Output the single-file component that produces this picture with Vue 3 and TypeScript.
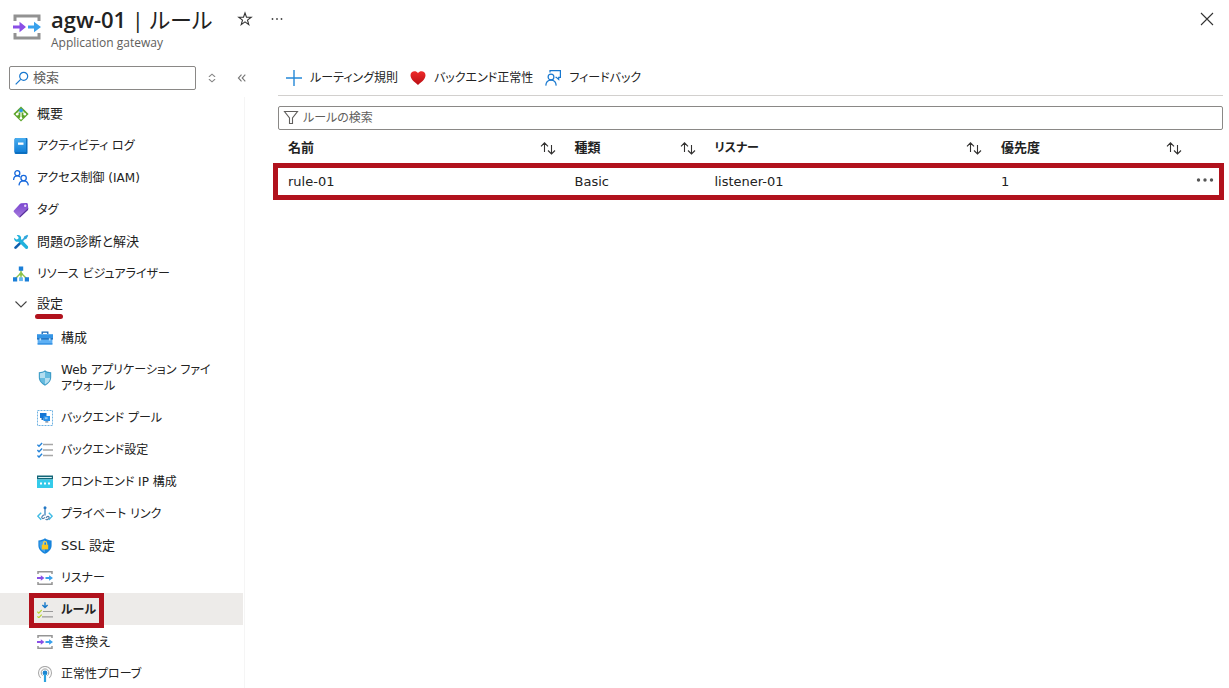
<script setup lang="ts">
import { ref } from 'vue'

interface MenuItem {
  label: string
  icon: string
}

interface Rule {
  name: string
  kind: string
  listener: string
  priority: number
}

const topItems: MenuItem[] = [
  { label: '概要', icon: 'overview' },
  { label: 'アクティビティ ログ', icon: 'log' },
  { label: 'アクセス制御 (IAM)', icon: 'people' },
  { label: 'タグ', icon: 'tag' },
  { label: '問題の診断と解決', icon: 'tools' },
  { label: 'リソース ビジュアライザー', icon: 'tree' },
]

const settingItems: MenuItem[] = [
  { label: '構成', icon: 'toolbox' },
  { label: 'Web アプリケーション ファイアウォール', icon: 'shield' },
  { label: 'バックエンド プール', icon: 'pool' },
  { label: 'バックエンド設定', icon: 'checks' },
  { label: 'フロントエンド IP 構成', icon: 'frontend' },
  { label: 'プライベート リンク', icon: 'link' },
  { label: 'SSL 設定', icon: 'ssl' },
  { label: 'リスナー', icon: 'gateway' },
  { label: 'ルール', icon: 'rules' },
  { label: '書き換え', icon: 'gateway' },
  { label: '正常性プローブ', icon: 'probe' },
]

const columns = ['名前', '種類', 'リスナー', '優先度']
const rules: Rule[] = [{ name: 'rule-01', kind: 'Basic', listener: 'listener-01', priority: 1 }]

const current = 'ルール'
const menuQuery = ref('')
const ruleQuery = ref('')
const expanded = ref(true)

const isKatakana = (text: string): boolean => /[ァ-ヶ]/.test(text)
</script>

<template>
  <div class="blade">
    <svg class="defs" aria-hidden="true">
      <defs>
        <linearGradient id="g-blue" x1="0" y1="0" x2="0" y2="1">
          <stop offset="0" stop-color="#4aaef0" />
          <stop offset="1" stop-color="#1380d8" />
        </linearGradient>
        <linearGradient id="g-purple" x1="0" y1="0" x2="0" y2="1">
          <stop offset="0" stop-color="#7a45d0" />
          <stop offset="1" stop-color="#a67bdc" />
        </linearGradient>
        <linearGradient id="g-heart" x1="0" y1="0" x2="0" y2="1">
          <stop offset="0" stop-color="#ee2a2a" />
          <stop offset="1" stop-color="#b80f14" />
        </linearGradient>
        <symbol id="overview" viewBox="0 0 16 16">
          <path d="M8 .4 15.6 8 8 15.6.4 8z" fill="#5ea52c" />
          <path d="M8 3.6V13M8 4 4 8M8 4l4 4" stroke="#d9efc4" stroke-width="1.6" fill="none" />
          <circle cx="8" cy="4.4" r="1.9" fill="#2a9be4" />
          <circle cx="4.2" cy="8.2" r="1.3" fill="#fff" />
          <circle cx="11.8" cy="8.2" r="1.3" fill="#fff" />
          <circle cx="8" cy="12.2" r="1.3" fill="#fff" />
        </symbol>
        <symbol id="log" viewBox="0 0 16 16">
          <path d="M3 0h10.500a1 1 0 0 1 1 1v14a1 1 0 0 1-1 1H3a1.500 1.500 0 0 1-1.500-1.500V1.500A1.500 1.500 0 0 1 3 0z" fill="#0c6fc0" />
          <path d="M3.300 0H12a1 1 0 0 1 1 1v13H1.500V1.800C1.500.8 2.300 0 3.300 0z" fill="url(#g-blue)" />
          <path d="M5 4.500h5.500v2.300H5z" fill="#fff" />
        </symbol>
        <symbol id="people" viewBox="0 0 16 16">
          <g fill="none" stroke="#1668dc" stroke-width="1.300">
            <circle cx="4.300" cy="3.200" r="2.500" />
            <circle cx="10.600" cy="8.100" r="2.700" />
            <path d="M.6 10C.7 7.500 2.200 5.900 4.300 5.900c1.100 0 2 .4 2.700 1.100M6 15.400c.2-2.900 2-4.600 4.600-4.600s4.500 1.700 4.700 4.600" />
          </g>
        </symbol>
        <symbol id="tag" viewBox="0 0 16 16">
          <path d="M8.200 1.200 13.600.9c.7 0 1.100.3 1.200 1l.5 4.700c0 .5-.1.900-.4 1.200l-7.500 7.400c-.5.500-1 .5-1.500 0L.9 10.100c-.5-.5-.5-1 0-1.500l6.200-6.900c.3-.3.7-.5 1.100-.5z" fill="url(#g-purple)" />
          <path d="m6.800 15.600 8.200-7.700.3-2-8.700 8.300z" fill="#552f99" />
          <circle cx="12.200" cy="3.800" r="1.200" fill="#e6d8fa" />
        </symbol>
        <symbol id="tools" viewBox="0 0 16 16">
          <path d="m14.300.8.9.9-1.900 3.200-1.400.4-2.400 2.500-1.300-1.300L10.700 4l.4-1.400z" fill="#33a7dc" />
          <path d="m6.800 7.800 1.700 1.600-5 5.200c-.6.600-1.300.6-1.900 0s-.6-1.300 0-1.900z" fill="#0f5fae" />
          <path d="M1.200 3.700 3.300 5.600l1.900-.5.400-1.900L3.700 1.200c1.400-.5 2.700-.2 3.600.8.800.9 1 1.900.7 3l6.700 7.100c.6.700.6 1.600 0 2.300-.7.700-1.600.7-2.300 0L5.500 7.700c-1.200.4-2.400.1-3.300-.8S.9 5 1.200 3.700z" fill="#21b2dd" />
        </symbol>
        <symbol id="tree" viewBox="0 0 16 16">
          <path d="M8 4v9M8 7 2.500 12.500M8 7l5.500 5.500" stroke="#8bc34a" stroke-width="1.400" fill="none" />
          <circle cx="8" cy="8" r="1.700" fill="#8bc34a" />
          <path d="M5.800.4h4.400v4.300H5.800zM0 11.200h4.200v4.200H0zM11.800 11.200H16v4.200h-4.200z" fill="#1b7fd8" />
          <path d="M6.100 11.300h3.800v3.800H6.100z" fill="#63b6ee" />
        </symbol>
        <symbol id="toolbox" viewBox="0 0 16 16">
          <path d="M5.200 4V2.200h5.600V4" fill="none" stroke="#1566b7" stroke-width="1.300" />
          <path d="M0 4.200h16v4.400H0z" fill="#3595e6" />
          <path d="M.6 8.600h14.800v5.900H.6z" fill="#5eb0f4" />
          <path d="M0 8.200h16v1.300H0z" fill="#1264b5" />
          <path d="M.6 13.300h14.800v1.200H.6z" fill="#2b8ade" />
          <path d="M2.500 8.200h1.600v2.300H2.500zM11.900 8.200h1.600v2.300h-1.600z" fill="#b9ddf8" />
        </symbol>
        <symbol id="shield" viewBox="0 0 16 16">
          <path d="M8 .3c1.900 1.400 3.800 1.900 6.200 2v5c0 4-3 6.700-6.200 8.500-3.200-1.800-6.200-4.500-6.200-8.500v-5C4.200 2.200 6.100 1.700 8 .3z" fill="#3c9bc6" />
          <path d="M8 1.700v6.200H2.900V3.200C5 3.100 6.500 2.600 8 1.700zM8 7.900h5.100c-.2 3.100-2.600 5.100-5.100 6.600z" fill="#b3def0" />
          <path d="M8 1.700c1.500.9 3 1.400 5.100 1.500v4.700H8zM8 7.900v6.600c-2.500-1.500-4.900-3.500-5.100-6.600z" fill="#66bbdf" />
        </symbol>
        <symbol id="pool" viewBox="0 0 16 16">
          <path d="M.5.500h15v15H.5z" fill="none" stroke="#6fb2e2" stroke-dasharray="2 1" />
          <path d="M3 3h6.500v5H3z" fill="#1475d4" />
          <path d="M6.500 6h6.500v5H6.500z" fill="#2590ec" />
          <path d="M8.300 11h3v1.700h-3z" fill="#8da0b2" />
          <path d="M4.500 8h2v2h-2z" fill="#1c6bb8" />
          <path d="M7.800 7.200h2.800v2H7.800z" fill="#8cc7f7" />
        </symbol>
        <symbol id="checks" viewBox="0 0 16 16">
          <path d="M6 2.600h10M6 8h10M6 13.500h10" stroke="#a6a6a6" stroke-width="1.500" />
          <path d="m.4 2.700 1.600 1.600L5.100 1M.4 8.100 2 9.700l3.100-3.300M.4 13.500 2 15.100l3.100-3.300" fill="none" stroke="#2584da" stroke-width="1.400" />
        </symbol>
        <symbol id="frontend" viewBox="0 0 16 16">
          <path d="M0 1.500h16v4H0z" fill="#146678" />
          <path d="M1.200 3h13.600v1H1.200z" fill="#d8f1f5" />
          <path d="M0 5.500h16V14H0z" fill="#34cbea" />
          <path d="M3 8.500h2v2H3zM7 8.500h2v2H7zM11 8.500h2v2h-2z" fill="#fff" />
        </symbol>
        <symbol id="link" viewBox="0 0 16 16">
          <path d="M4.200 6.700.8 10.200l3.400 3.600M11.800 6.700l3.400 3.500-3.400 3.600" fill="none" stroke="#42bce5" stroke-width="1.400" />
          <path d="M8 2v7.400" stroke="#3c80bd" stroke-width="1.300" />
          <circle cx="8" cy="1.800" r="1.500" fill="#2478c5" />
          <path d="m6.800 8.800-1.600 1.500c-1.100 1.200.2 2.900 1.600 2l1.100-.9M9 11.800l.8-1c1.300-1.300 3 .2 2 1.500l-1 1c-.8.700-1.700.5-2.200-.1" fill="none" stroke="#527eaa" stroke-width="1.200" />
        </symbol>
        <symbol id="ssl" viewBox="0 0 16 16">
          <path d="M8 .3c2 1.500 3.900 2 6.600 2.100v5c0 4-3.200 6.600-6.600 8.400-3.400-1.800-6.600-4.400-6.600-8.400v-5C4.100 2.300 6 1.800 8 .3z" fill="#1683db" />
          <path d="M8 1.700v12.700c-2.700-1.500-5.400-3.700-5.400-7.100V3.600C5 3.400 6.400 2.800 8 1.700z" fill="#45a4ed" />
          <path d="M6.300 7V5.400a1.700 1.700 0 0 1 3.400 0V7" fill="none" stroke="#f5d352" stroke-width="1.200" />
          <path d="M4.800 6.700h6.400v4.700H4.800z" fill="#fac61c" />
        </symbol>
        <symbol id="gateway" viewBox="0 0 16 16">
          <path d="M1 4V1.800h14V4M1 12v2.200h14V12" fill="none" stroke="#959595" stroke-width="1.500" />
          <path d="M0 7.100h3.800V5.200L7.400 8l-3.600 2.800V8.900H0z" fill="#8a4fe6" />
          <path d="M8.500 7.100h3.600V5.200L16 8l-3.900 2.800V8.900H8.500z" fill="#39a1ec" />
        </symbol>
        <symbol id="rules" viewBox="0 0 16 16">
          <path d="M6 9.500h10M5 14.800h11" stroke="#999" stroke-width="1.200" />
          <path d="m.4 9.700 1.400 1.400L4.700 8M.4 14.300l1.400 1.400 2.900-3.100" fill="none" stroke="#b8d532" stroke-width="1.200" />
          <path d="M8 .2v5M5.400 3 8 5.600 10.600 3" fill="none" stroke="#1678c8" stroke-width="1.400" />
        </symbol>
        <symbol id="probe" viewBox="0 0 16 16">
          <path d="M3.800 11.900a6.500 6.500 0 1 1 8.400 0" fill="none" stroke="#aaa" stroke-width="1.100" />
          <path d="M5.500 9.600a3.800 3.800 0 1 1 5 0" fill="none" stroke="#999" />
          <circle cx="8" cy="7" r="2.400" fill="#1b86d1" />
          <path d="M6.900 8h2.200v8H6.900z" fill="#2da3df" />
        </symbol>
        <symbol id="sort" viewBox="0 0 16 16">
          <path d="M4.500 12V3M1 6.300l3.500-3.500L8 6.300M11.500 5v9M8 10.500l3.500 3.500 3.500-3.500" fill="none" stroke="#323130" stroke-width="1.100" />
        </symbol>
      </defs>
    </svg>

    <header class="head">
      <svg class="head-icon" viewBox="0 0 28 28" aria-hidden="true">
        <path d="M2 8V3h24v5M2 20v5h24v-5" fill="none" stroke="#929292" stroke-width="3" />
        <path d="M0 12.500h6.500V8.800l6.500 5.200-6.500 5.200v-3.700H0z" fill="#8a4fe6" />
        <path d="M15 12.500h6V8.800l7 5.200-7 5.200v-3.700h-6z" fill="#39a1ec" />
      </svg>
      <div class="head-text">
        <h1><b>agw-01</b> | ルール</h1>
        <p>Application gateway</p>
      </div>
      <button class="icon-btn" type="button" aria-label="お気に入り">
        <svg width="16" height="16" viewBox="0 0 16 16">
          <path d="m8 2 1.500 4.300h4.700l-3.700 2.800 1.300 4.500L8 10.900l-3.800 2.700 1.300-4.500-3.700-2.800h4.700z" fill="none" stroke="#333" stroke-width="1.100" />
        </svg>
      </button>
      <button class="icon-btn" type="button" aria-label="その他">
        <svg width="16" height="16" viewBox="0 0 16 16" fill="#444">
          <circle cx="3.500" cy="8" r="0.900" /><circle cx="8" cy="8" r="0.900" /><circle cx="12.500" cy="8" r="0.900" />
        </svg>
      </button>
      <button class="icon-btn close" type="button" aria-label="閉じる">
        <svg width="16" height="16" viewBox="0 0 16 16">
          <path d="m2 2 12 12M14 2 2 14" stroke="#333" stroke-width="1.100" />
        </svg>
      </button>
    </header>

    <div class="body">
      <aside class="side">
        <div class="side-tools">
          <label class="field menu-search">
            <svg width="14" height="14" viewBox="0 0 14 14" aria-hidden="true">
              <circle cx="8.700" cy="5.300" r="4" fill="none" stroke="#1878cf" stroke-width="1.200" />
              <path d="m5.700 8.300-5 5" stroke="#1878cf" stroke-width="1.200" />
            </svg>
            <input v-model="menuQuery" type="text" placeholder="検索" aria-label="検索" />
          </label>
          <button class="icon-btn" type="button" aria-label="並べ替え">
            <svg width="16" height="16" viewBox="0 0 16 16">
              <path d="M5.300 7V6.500L8 4.200l2.700 2.300V7M5.300 9v.5L8 11.800l2.700-2.300V9" fill="none" stroke="#888" stroke-width="1.100" />
            </svg>
          </button>
          <button class="icon-btn" type="button" aria-label="折りたたむ">
            <svg width="16" height="16" viewBox="0 0 16 16">
              <path d="M7.500 4.700 4.400 8l3.100 3.300M11.300 4.700 8.200 8l3.100 3.300" fill="none" stroke="#777" stroke-width="1.100" />
            </svg>
          </button>
        </div>
        <nav class="menu">
          <a
            v-for="item in topItems"
            :key="item.label"
            class="item"
            :class="{ kana: isKatakana(item.label) }"
            href="#"
          >
            <svg class="ico" aria-hidden="true"><use :href="'#' + item.icon" /></svg>
            <span>{{ item.label }}</span>
          </a>
          <button class="item group" type="button" :aria-expanded="expanded" @click="expanded = !expanded">
            <svg class="ico" viewBox="0 0 16 16" aria-hidden="true">
              <path d="m2.500 5.500 5.500 5.500 5.500-5.500" fill="none" stroke="#444" stroke-width="1.100" />
            </svg>
            <span class="underlined">設定</span>
          </button>
          <template v-if="expanded">
            <a
              v-for="item in settingItems"
              :key="item.label"
              class="item sub"
              :class="{ active: item.label === current, kana: isKatakana(item.label) }"
              href="#"
            >
              <svg class="ico" aria-hidden="true"><use :href="'#' + item.icon" /></svg>
              <span>{{ item.label }}</span>
            </a>
          </template>
        </nav>
      </aside>

      <main class="main">
        <div class="toolbar">
          <button class="cmd" type="button">
            <svg class="ico" viewBox="0 0 16 16" aria-hidden="true">
              <path d="M8 0v16M0 8h16" stroke="#2488d8" stroke-width="1.400" />
            </svg>
            ルーティング規則
          </button>
          <button class="cmd" type="button">
            <svg class="ico" viewBox="0 0 16 16" aria-hidden="true">
              <path d="M8 15C5.500 12.600.5 9.600.5 5.200.5 1 6 .1 8 3.200 10 .1 15.500 1 15.500 5.200 15.500 9.600 10.500 12.600 8 15z" fill="url(#g-heart)" />
            </svg>
            バックエンド正常性
          </button>
          <button class="cmd" type="button">
            <svg class="ico" viewBox="0 0 16 16" aria-hidden="true">
              <g fill="none" stroke="#1878cf" stroke-width="1.200">
                <circle cx="6" cy="7" r="2.900" />
                <path d="M.8 15.600c.2-3.400 2.300-5.500 5.200-5.500s5 2.100 5.200 5.500M5 2.500V.7h10.400v6.600h-1.700v2.200l-2.400-2.200h-.8" />
              </g>
            </svg>
            フィードバック
          </button>
        </div>

        <label class="field rule-search">
          <svg width="16" height="16" viewBox="0 0 16 16" aria-hidden="true">
            <path d="M1.500 1.500h13L9.500 8v5.500h-3V8z" fill="none" stroke="#605e5c" stroke-width="1.100" />
          </svg>
          <input v-model="ruleQuery" type="text" placeholder="ルールの検索" aria-label="ルールの検索" />
        </label>

        <table class="rules">
          <colgroup>
            <col />
            <col class="c-kind" />
            <col />
            <col class="c-priority" />
            <col class="c-more" />
          </colgroup>
          <thead>
            <tr>
              <th v-for="c in columns" :key="c" scope="col">
                <div class="th">
                  <span :class="{ kana: isKatakana(c) }">{{ c }}</span>
                  <button class="icon-btn" type="button" :aria-label="c + ' 並べ替え'">
                    <svg class="ico"><use href="#sort" /></svg>
                  </button>
                </div>
              </th>
              <td></td>
            </tr>
          </thead>
          <tbody>
            <tr v-for="r in rules" :key="r.name" class="marked">
              <td>{{ r.name }}</td>
              <td>{{ r.kind }}</td>
              <td>{{ r.listener }}</td>
              <td>{{ r.priority }}</td>
              <td class="more">
                <button class="icon-btn" type="button" aria-label="操作">
                  <svg width="18" height="16" viewBox="0 0 18 16" fill="#555">
                    <circle cx="2.500" cy="8" r="1.700" /><circle cx="9" cy="8" r="1.700" /><circle cx="15.500" cy="8" r="1.700" />
                  </svg>
                </button>
              </td>
            </tr>
          </tbody>
        </table>
      </main>
    </div>
  </div>
</template>

<style>
body {
  margin: 0;
  background: #fff;
}
</style>

<style scoped>
.blade {
  height: 100vh;
  overflow: hidden;
  display: flex;
  flex-direction: column;
  color: #222;
  font-family: 'DejaVu Sans', 'Noto Sans CJK JP', sans-serif;
  font-size: 13px;
  line-height: 16px;
  font-feature-settings: 'palt';
}
.blade *,
.blade *::after {
  box-sizing: border-box;
}
.defs {
  position: absolute;
  width: 0;
  height: 0;
}
button,
input {
  font: inherit;
  font-feature-settings: inherit;
  color: inherit;
  background: none;
  border: 0;
  padding: 0;
  margin: 0;
}
svg {
  display: block;
  flex: none;
}
.ico {
  width: 16px;
  height: 16px;
  flex: none;
}
.icon-btn {
  width: 16px;
  height: 16px;
  flex: none;
}
.head {
  flex: none;
  display: flex;
  height: 60px;
  padding: 4px 14px 0 13px;
}
.head-icon {
  width: 28px;
  height: 28px;
  margin-top: 9px;
}
.head-text {
  margin-left: 10px;
  margin-right: 8px;
  font-family: 'Open Sans', 'Noto Sans CJK JP', sans-serif;
}
h1 {
  margin: 0;
  font-size: 22px;
  line-height: 31px;
  font-weight: 400;
  white-space: nowrap;
}
h1 b {
  font-weight: 600;
}
.head-text p {
  margin: 0;
  font-size: 12px;
  color: #605e5c;
}
.head .icon-btn {
  margin: 7px 0 0 16px;
}
.head .close {
  margin-left: auto;
}
.body {
  flex: 1;
  min-height: 0;
  display: flex;
}
.side {
  flex: none;
  width: 245px;
  display: flex;
  flex-direction: column;
}
.side-tools {
  display: flex;
  align-items: center;
  flex: none;
  height: 37px;
  padding: 0 0 1px 9px;
}
.side-tools .icon-btn {
  margin-left: 8px;
}
.side-tools .icon-btn + .icon-btn {
  margin-left: 14px;
}
.field {
  display: flex;
  align-items: center;
  height: 24px;
  border: 1px solid #8a8886;
  border-radius: 2px;
  padding: 0 4px;
}
.field input {
  flex: 1;
  min-width: 0;
  margin-left: 4px;
  outline: 0;
}
.field input::placeholder {
  color: #605e5c;
  opacity: 1;
}
.menu-search {
  width: 187px;
  padding: 0 5px;
}
.menu {
  flex: 1;
  min-height: 0;
  overflow: hidden;
  padding-right: 1px;
  border-right: 1px solid #f5f5f5;
}
.item {
  display: flex;
  align-items: center;
  gap: 8px;
  width: 100%;
  min-height: 32px;
  padding: 2px 32px 0 13px;
  color: inherit;
  text-decoration: none;
  text-align: left;
}
.kana {
  font-size: 12px;
}
.group {
  padding-top: 0;
  padding-bottom: 2px;
}
.underlined {
  position: relative;
}
.underlined::after {
  content: '';
  position: absolute;
  left: -2px;
  right: 0;
  top: 18px;
  height: 5px;
  border-radius: 3px;
  background: #b1121d;
}
.sub {
  padding-left: 37px;
}
.sub:nth-of-type(8) {
  min-height: 48px;
}
.active {
  position: relative;
  background: #edebe9;
  font-weight: 700;
}
.active::after {
  content: '';
  position: absolute;
  left: 29px;
  top: 0;
  width: 75px;
  height: 35px;
  border: 5px solid #b1121d;
}
.main {
  flex: 1;
  min-width: 0;
  margin: 0 6px 0 33px;
}
.toolbar {
  display: flex;
  gap: 12px;
  height: 36px;
  padding-left: 8px;
  border-bottom: 1px solid #d2d0ce;
  font-size: 12px;
}
.cmd {
  display: flex;
  align-items: center;
  gap: 8px;
}
.rule-search {
  margin-top: 10px;
  font-size: 12px;
}
.rules {
  width: 100%;
  table-layout: fixed;
  border-collapse: collapse;
}
.c-kind {
  width: 140px;
}
.c-priority {
  width: 200px;
}
.c-more {
  width: 32px;
}
.rules th,
.rules td {
  height: 36px;
  padding: 0 9px 0 10px;
  text-align: left;
}
.rules tbody td {
  height: 32px;
}
.rules .more {
  padding: 0 5px;
}
.more .icon-btn {
  width: 18px;
}
.th {
  display: flex;
  align-items: center;
  justify-content: space-between;
}
.marked {
  position: relative;
}
.marked td:first-child::after {
  content: '';
  position: absolute;
  left: -5px;
  right: -1px;
  top: -3px;
  height: 37px;
  border: 5px solid #b1121d;
  pointer-events: none;
}
</style>
